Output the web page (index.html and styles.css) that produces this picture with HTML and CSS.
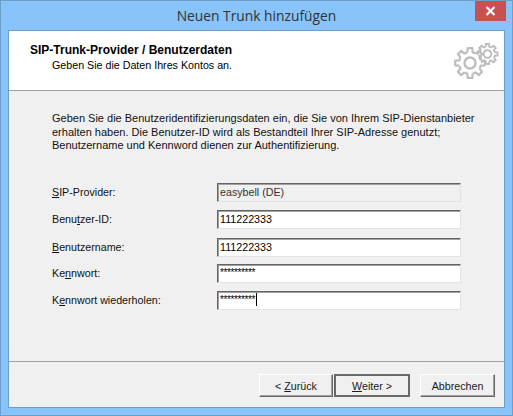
FILE: index.html
```html
<!DOCTYPE html>
<html>
<head>
    <meta charset="utf-8">
    <title>Neuen Trunk hinzufügen</title>
    <link rel="stylesheet" href="styles.css">
</head>
<body>
    <div class="window">
        <div class="titlebar">
            <span class="title">Neuen Trunk hinzufügen</span>
            <div class="close">
                <svg width="11" height="10" viewBox="0 0 11 10"><path d="M1.5 1l8 8M9.5 1l-8 8" stroke="#fff" stroke-width="2.2" fill="none"/></svg>
            </div>
        </div>
        <div class="client">
            <div class="header">
                <div class="header-text">
                    <h1>SIP-Trunk-Provider / Benutzerdaten</h1>
                    <p>Geben Sie die Daten Ihres Kontos an.</p>
                </div>
                <svg class="gears" width="46" height="38" viewBox="0 0 46 38">
                    <defs>
                        <path id="sector" d="M-2.66-10.67L-2.35-14.8H2.35L2.66-10.67A11 11 0 0 1 5.67-9.43"/>
                        <g id="gear">
                            <use href="#sector"/>
                            <use href="#sector" transform="rotate(45)"/>
                            <use href="#sector" transform="rotate(90)"/>
                            <use href="#sector" transform="rotate(135)"/>
                            <use href="#sector" transform="rotate(180)"/>
                            <use href="#sector" transform="rotate(225)"/>
                            <use href="#sector" transform="rotate(270)"/>
                            <use href="#sector" transform="rotate(315)"/>
                        </g>
                    </defs>
                    <g fill="none" stroke="#bebebe" stroke-linejoin="round">
                        <g transform="translate(33.5 13) scale(.68)" stroke-width="2.9">
                            <use href="#gear"/>
                            <circle r="5.6"/>
                        </g>
                        <circle cx="16" cy="22" r="11" fill="#fff" stroke="none"/>
                        <g transform="translate(16 22)" stroke-width="2.2">
                            <use href="#gear"/>
                            <circle r="5.5" stroke-width="2.4"/>
                        </g>
                    </g>
                </svg>
            </div>
            <div class="content">
                <p class="intro">Geben Sie die Benutzeridentifizierungsdaten ein, die Sie von Ihrem SIP-Dienstanbieter erhalten haben. Die Benutzer-ID wird als Bestandteil Ihrer SIP-Adresse genutzt; Benutzername und Kennword dienen zur Authentifizierung.</p>
                <div class="form">
                    <div class="row">
                        <label><u>S</u>IP-Provider:</label>
                        <div class="field disabled">easybell (DE)</div>
                    </div>
                    <div class="row">
                        <label>Benu<u>t</u>zer-ID:</label>
                        <div class="field">111222333</div>
                    </div>
                    <div class="row row-gap">
                        <label><u>B</u>enutzername:</label>
                        <div class="field">111222333</div>
                    </div>
                    <div class="row row-tight">
                        <label>Ke<u>n</u>nwort:</label>
                        <div class="field secret">**********</div>
                    </div>
                    <div class="row">
                        <label>K<u>e</u>nnwort wiederholen:</label>
                        <div class="field secret">**********<span class="caret"></span></div>
                    </div>
                </div>
            </div>
            <div class="footer">
                <button>&lt; <u>Z</u>urück</button>
                <button class="default"><u>W</u>eiter &gt;</button>
                <button class="cancel">Abbrechen</button>
            </div>
        </div>
    </div>
</body>
</html>
```

FILE: styles.css
```css
html, body {
    margin: 0;
    padding: 0;
}
body {
    width: 513px;
    height: 416px;
    overflow: hidden;
    font-family: "Liberation Sans", Arial, sans-serif;
    font-size: 10.7px;
    color: #111;
}
.window {
    box-sizing: border-box;
    width: 513px;
    height: 416px;
    display: flex;
    flex-direction: column;
    background: #88c3fa;
    border: 1px solid #6c9fcb;
}
.titlebar {
    height: 29px;
    flex: none;
    display: flex;
    justify-content: center;
    align-items: center;
    padding-bottom: 1px;
    box-sizing: border-box;
    position: relative;
}
.title {
    font-family: "Open Sans", sans-serif;
    font-size: 13.8px;
    color: #333;
}
.close {
    position: absolute;
    top: 0;
    right: 6px;
    width: 31px;
    height: 20px;
    display: flex;
    justify-content: center;
    align-items: center;
    background: #c75050;
}
.client {
    flex: 1;
    margin: 0 7px 7px;
    display: flex;
    flex-direction: column;
    background: #f0f0f0;
    border: 1px solid #6c9fcb;
}
.header {
    height: 59px;
    flex: none;
    display: flex;
    justify-content: space-between;
    background: #fff;
    border-bottom: 1px solid #a0a0a0;
}
.header-text {
    padding: 12px 0 0 21px;
}
.header h1 {
    margin: 0;
    font-size: 12px;
    font-weight: bold;
    line-height: 15px;
    color: #000;
}
.header p {
    margin: 0;
    padding-left: 22px;
    line-height: 15px;
    color: #000;
}
.gears {
    margin: 10px 4px 0 0;
}
.content {
    flex: 1;
    padding: 21px 30px 0 43px;
}
.intro {
    margin: 0;
    width: 440px;
    font-size: 11px;
    line-height: 13.5px;
}
.form {
    margin-top: 30px;
}
.row {
    display: flex;
    align-items: center;
    height: 19px;
    margin-bottom: 8px;
}
.row-gap {
    margin-top: 9px;
}
.row-tight {
    margin-top: -1px;
}
.row label {
    width: 165px;
}
.field {
    box-sizing: border-box;
    width: 244px;
    height: 19px;
    padding: 1px 0 0 2px;
    line-height: 15px;
    background: #fff;
    border: 1px solid;
    border-color: #646464 #e3e3e3 #e3e3e3 #646464;
    box-shadow: inset 1px 1px 0 #a0a0a0;
    color: #000;
    white-space: nowrap;
}
.field.disabled {
    background: #f0f0f0;
    color: #333;
}
.secret {
    font-size: 10px;
    letter-spacing: -.4px;
    line-height: 13px;
}
.caret {
    display: inline-block;
    width: 1px;
    height: 13px;
    margin-left: 1px;
    vertical-align: top;
    background: #000;
}
.footer {
    height: 46px;
    flex: none;
    display: flex;
    gap: 1px;
    box-sizing: border-box;
    padding: 12px 9px 0 0;
    justify-content: flex-end;
    border-top: 1px solid #a0a0a0;
}
button {
    box-sizing: border-box;
    width: 74px;
    height: 23px;
    padding: 0;
    font-family: inherit;
    font-size: 10.7px;
    color: #1a1a1a;
    background: #f0f0f0;
    border: 1px solid;
    border-color: #fff #696969 #696969 #fff;
    box-shadow: inset -1px -1px 0 #a0a0a0;
}
button.default {
    width: 76px;
    border: 2px solid #696969;
    box-shadow: none;
}
button.cancel {
    width: 75px;
    margin-left: 9px;
}
```
